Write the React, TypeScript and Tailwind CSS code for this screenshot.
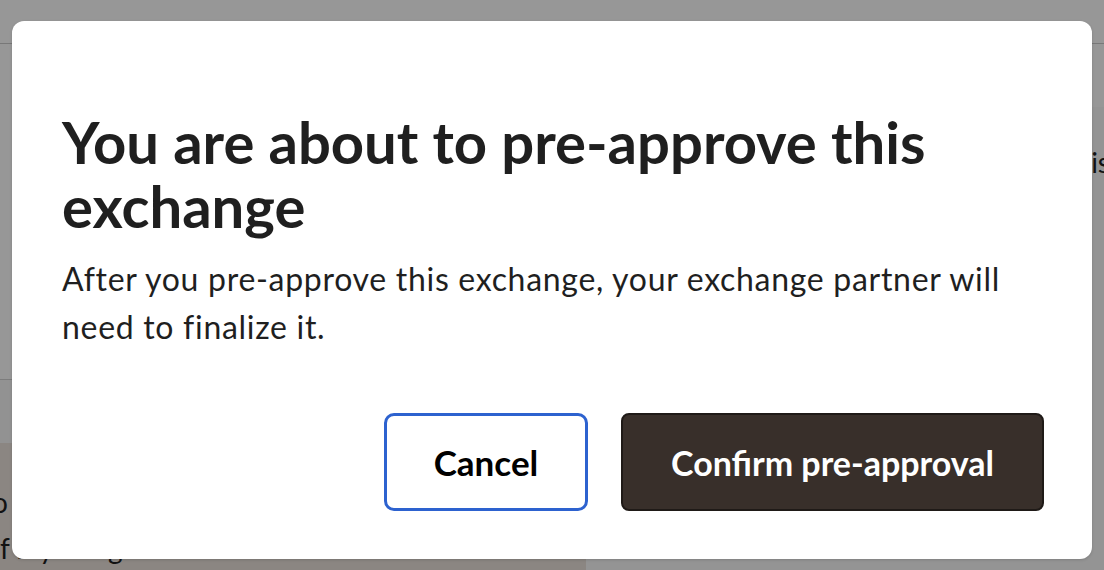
import { useState } from 'react';

function BackgroundPage() {
  return (
    <div className="flex h-[570px] w-full flex-col overflow-hidden bg-[#fcfcfc] text-[#1f1f1f]">
      <header className="h-[44px] shrink-0 border-b border-[#c8c8c8] bg-[#fcfcfc]" />
      <div className="flex flex-1">
        <div className="flex w-[586px] flex-col">
          <div className="h-[335px]" />
          <div className="h-[64px] border-t border-[#cfcfcf] bg-[#f3f3f3]" />
          <div className="flex-1 bg-[#e8dfd9] pt-[36px] text-[28px] leading-[46px]">
            <p className="-ml-[8px]">o</p>
            <p>f my things</p>
          </div>
        </div>
        <div className="flex flex-1 flex-col">
          <div className="h-[63px]" />
          <div className="flex-1 bg-[#f7f7f7] pt-[34px] text-right text-[28px]">
            <span className="-mr-[6px]">this</span>
          </div>
        </div>
      </div>
    </div>
  );
}

export default function App() {
  const [open] = useState(true);

  return (
    <div className="relative h-[570px] w-[1104px] overflow-hidden font-['Lato',sans-serif]">
      <BackgroundPage />
      {open && (
        <div className="absolute inset-0 flex items-start justify-center bg-black/40 pt-[21px]">
          <div className="flex h-[538px] w-[1080px] flex-col rounded-[12px] bg-white pl-[50px] pr-[48px] pb-[48px] pt-[89px] shadow-[0_1px_3px_rgba(0,0,0,0.15)]">
            <h2 className="text-[58px] font-bold leading-[64px] text-[#1f1f1f]">
              You are about to pre-approve this exchange
            </h2>
            <p className="mt-[17px] w-[960px] text-[32px] leading-[48px] tracking-[0.7px] text-[#1f1f1f]">
              After you pre-approve this exchange, your exchange partner will need to finalize it.
            </p>
            <div className="mt-auto flex justify-end gap-[33px]">
              <button
                type="button"
                className="h-[98px] w-[204px] rounded-[10px] border-[3px] border-[#2d62cf] bg-white text-[35px] font-bold text-black"
              >
                Cancel
              </button>
              <button
                type="button"
                className="h-[98px] w-[423px] rounded-[8px] border-2 border-[#1f1a17] bg-[#382f2a] text-[34px] font-bold text-white"
              >
                Confirm pre-approval
              </button>
            </div>
          </div>
        </div>
      )}
    </div>
  );
}
